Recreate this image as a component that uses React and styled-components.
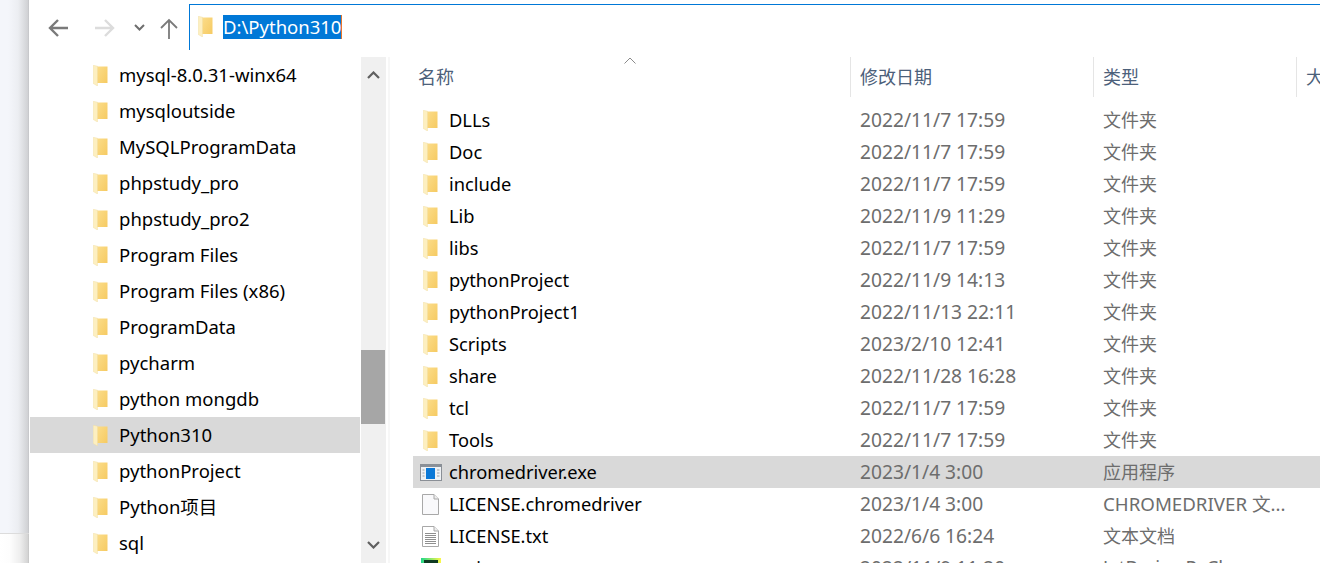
import React from "react";
import styled, { createGlobalStyle } from "styled-components";

const Global = createGlobalStyle`
  html, body { margin: 0; padding: 0; background: #fff; overflow: hidden; }
  #root { height: 563px; overflow: hidden; }
`;
const FONT = `"Noto Sans", "Noto Sans CJK SC", sans-serif`;

const Page = styled.div`
  display: flex; width: 1320px; height: 563px; overflow: hidden;
  font-family: ${FONT}; font-size: 18px; background: #fff;
`;
const Strip = styled.div`display: flex; flex-direction: column; width: 29px; flex: none;`;
const StripTop = styled.div`
  height: 534px; flex: none; border-bottom: 1px solid #dcdcdc; box-sizing: border-box;
  background: linear-gradient(90deg, #f4f6fb 0, #f4f6fb 8px, #eceef2 18px, #d0d1d4 28px, #bfc0c3 29px);
`;
const StripBottom = styled.div`
  flex: 1;
  background: linear-gradient(90deg, #fff 0, #fdfdfd 10px, #eeeeee 20px, #d3d3d3 28px, #c0c0c0 29px);
`;
const Window = styled.div`flex: 1; display: flex; flex-direction: column; min-width: 0; background: #fff;`;
const Toolbar = styled.div`display: flex; height: 57px; flex: none;`;
const Nav = styled.div`display: flex; width: 160px; flex: none;`;
const NavIcon = styled.svg`
  display: block; flex: none; margin-left: ${p => p.$ml}px; margin-top: ${p => p.$mt}px;
`;
const Address = styled.div`
  flex: 1; height: 46px; margin-top: 4px; box-sizing: border-box;
  border-top: 1px solid #0078d7; border-left: 1px solid #0078d7;
  display: flex; align-items: flex-start; padding: 10px 0 0 8px;
`;
const AddressIcon = styled.span`display: flex; width: 25px; flex: none; margin-top: 1px;`;
const Selected = styled.span`
  display: block; height: 24px; line-height: 24px; background: #0078d7; color: #fff;
  font-size: 18.5px; border-right: 1px solid #e8762c; white-space: nowrap;
`;
const Body = styled.div`display: flex; flex: 1; min-height: 0;`;
const Sidebar = styled.div`width: 332px; flex: none; overflow: hidden; padding-left: 1px; box-sizing: border-box; font-size: 18.5px;`;
const TreeRow = styled.div`
  display: flex; align-items: center; height: 36px; width: 330px; padding-left: 63px; box-sizing: border-box;
  background: ${p => (p.$active ? "#d9d9d9" : "transparent")}; color: #000; white-space: nowrap;
`;
const TreeIcon = styled.span`display: flex; width: 26px; flex: none;`;
const Label = styled.span`padding-bottom: 2px;`;
const Scroll = styled.div`
  width: 25px; flex: none; background: #f0f0f0; display: flex; flex-direction: column;
  border-right: 2px solid #fff; box-sizing: content-box;
`;
const ScrollBtn = styled.div`height: 36px; flex: none; display: flex; align-items: center; justify-content: center;`;
const ScrollGap = styled.div`height: 257px; flex: none;`;
const Thumb = styled.div`height: 74px; flex: none; background: #a6a6a6; margin-right: 1px;`;
const ScrollRest = styled.div`flex: 1;`;
const Rail = styled.div`width: 2px; flex: none; background: #f7f7f7; margin-right: 23px;`;
const List = styled.div`flex: 1; min-width: 0; overflow: hidden; position: relative;`;
const Header = styled.div`display: flex; height: 40px; margin-bottom: 7px; color: #4c607a;`;
const HeadCell = styled.div`
  width: ${p => p.$w}px; flex: none; height: 40px; line-height: 40px; box-sizing: border-box;
  padding-left: ${p => p.$pl}px; border-right: ${p => (p.$noLine ? "none" : "1px solid #e5e5e5")};
  white-space: nowrap;
`;
const SortArrow = styled.svg`position: absolute; left: 211px; top: 0;`;
const Row = styled.div`
  display: flex; align-items: center; height: 32px; white-space: nowrap;
  background: ${p => (p.$active ? "#d9d9d9" : "transparent")};
`;
const NameCell = styled.div`
  display: flex; align-items: center; width: 438px; flex: none; color: #000; padding-left: 7px;
  box-sizing: border-box; font-size: 18.3px;
`;
const RowIcon = styled.span`display: flex; width: ${p => 29 - p.$ml}px; margin-left: ${p => p.$ml}px; flex: none; align-items: center;`;
const DateCell = styled.div`
  width: 243px; flex: none; color: #6d6d6d; padding: 0 0 2px 9px; box-sizing: border-box; font-size: 19.2px;
`;
const TypeCell = styled.div`
  flex: 1; color: #6d6d6d; padding: 0 0 ${p => (p.$latin ? 4 : 2)}px 9px; box-sizing: border-box;
  font-size: ${p => (p.$latin ? "18.7px" : "18px")};
`;

const Folder = ({ id }) => (
  <svg width="15" height="21" viewBox="0 0 15 21">
    <defs>
      <linearGradient id={id} x1="0" x2="1" y1="0.1" y2="0.9">
        <stop offset="0" stopColor="#fbdc88" />
        <stop offset="1" stopColor="#f6cb64" />
      </linearGradient>
    </defs>
    <path d="M4 1.500H14.500V18H4Z" fill={`url(#${id})`} />
    <path d="M0.200 0.200L4.500 1.200V21L0.200 18.500Z" fill="#fdefc0" stroke="#f0dca0" strokeWidth="0.4" />
  </svg>
);

const ExeIcon = () => (
  <svg width="22" height="17" viewBox="0 0 22 17">
    <rect x="0.5" y="0.5" width="21" height="16" fill="#eef1f4" stroke="#8a8f96" />
    <rect x="1" y="1" width="20" height="2" fill="#8a9098" />
    <rect x="6" y="4" width="9" height="11" fill="#0a78d7" />
    <path d="M2.500 6h2M2.500 9h2M2.500 12h2M17 6h2.500M17 9h2.500M17 12h2.500" stroke="#9aa0a8" />
  </svg>
);
const FileIcon = ({ lines }) => (
  <svg width="17" height="21" viewBox="0 0 17 21">
    <path d="M0.500 0.500H12L16.500 5V20.500H0.500Z" fill={lines ? "#fff" : "#f9f9fb"} stroke="#a8a8a8" />
    <path d="M12 0.500V5H16.500" fill="#eee" stroke="#a8a8a8" />
    {lines && <path d="M3 7.500h11M3 9.500h11M3 11.500h11M3 13.500h11M3 15.500h11M3 17.500h11" stroke="#8f8f8f" />}
  </svg>
);
const PyIcon = () => (
  <svg width="20" height="20" viewBox="0 0 20 20">
    <defs>
      <linearGradient id="pyg" x1="0" x2="1" y1="0" y2="0">
        <stop offset="0" stopColor="#21d789" />
        <stop offset="1" stopColor="#fcf84a" />
      </linearGradient>
    </defs>
    <rect width="20" height="20" fill="url(#pyg)" />
    <rect x="3" y="2" width="14" height="15" fill="#0e3a22" />
  </svg>
);

const tree = ["mysql-8.0.31-winx64", "mysqloutside", "MySQLProgramData", "phpstudy_pro", "phpstudy_pro2", "Program Files", "Program Files (x86)", "ProgramData", "pycharm", "python mongdb", "Python310", "pythonProject", "Python项目", "sql"];
const files = [
  ["DLLs", "2022/11/7 17:59", "文件夹"], ["Doc", "2022/11/7 17:59", "文件夹"], ["include", "2022/11/7 17:59", "文件夹"],
  ["Lib", "2022/11/9 11:29", "文件夹"], ["libs", "2022/11/7 17:59", "文件夹"], ["pythonProject", "2022/11/9 14:13", "文件夹"],
  ["pythonProject1", "2022/11/13 22:11", "文件夹"], ["Scripts", "2023/2/10 12:41", "文件夹"], ["share", "2022/11/28 16:28", "文件夹"],
  ["tcl", "2022/11/7 17:59", "文件夹"], ["Tools", "2022/11/7 17:59", "文件夹"],
  ["chromedriver.exe", "2023/1/4 3:00", "应用程序", "exe"], ["LICENSE.chromedriver", "2023/1/4 3:00", "CHROMEDRIVER 文...", "file"],
  ["LICENSE.txt", "2022/6/6 16:24", "文本文档", "txt"], ["main.py", "2022/11/9 11:20", "JetBrains PyCharm", "py"],
];
const iconFor = (k, i) => k === "exe" ? <ExeIcon /> : k === "file" ? <FileIcon /> : k === "txt" ? <FileIcon lines /> : k === "py" ? <PyIcon /> : <Folder id={`f${i}`} />;
const shift = { exe: 0, file: 2, txt: 2, py: 1 };

export default function App() {
  return (
    <Page>
      <Global />
      <Strip><StripTop /><StripBottom /></Strip>
      <Window>
        <Toolbar>
          <Nav>
            <NavIcon $ml={19} $mt={18} width="21" height="20" viewBox="0 0 21 20" fill="none" stroke="#7a7a7a" strokeWidth="2.400">
              <path d="M20 10H2M10 2L2 10l8 8" />
            </NavIcon>
            <NavIcon $ml={25} $mt={18} width="21" height="20" viewBox="0 0 21 20" fill="none" stroke="#dcdcdc" strokeWidth="2.400">
              <path d="M1 10h18M11 2l8 8-8 8" />
            </NavIcon>
            <NavIcon $ml={19} $mt={24} width="11" height="7" viewBox="0 0 11 7" fill="none" stroke="#6e6e6e" strokeWidth="2">
              <path d="M1 1l4.500 4.500L10 1" />
            </NavIcon>
            <NavIcon $ml={15} $mt={18} width="18" height="21" viewBox="0 0 18 21" fill="none" stroke="#7a7a7a" strokeWidth="1.800">
              <path d="M9 21V2M1 10l8-8 8 8" />
            </NavIcon>
          </Nav>
          <Address>
            <AddressIcon><Folder id="addr" /></AddressIcon>
            <Selected>D:\Python310</Selected>
          </Address>
        </Toolbar>
        <Body>
          <Sidebar>
            {tree.map((t, i) => (
              <TreeRow key={t} $active={t === "Python310"}>
                <TreeIcon><Folder id={`t${i}`} /></TreeIcon><Label>{t}</Label>
              </TreeRow>
            ))}
          </Sidebar>
          <Scroll>
            <ScrollBtn>
              <svg width="13" height="8" viewBox="0 0 13 8" fill="none" stroke="#606060" strokeWidth="2.200"><path d="M1 7l5.500-5.500L12 7" /></svg>
            </ScrollBtn>
            <ScrollGap />
            <Thumb />
            <ScrollRest />
            <ScrollBtn>
              <svg width="13" height="8" viewBox="0 0 13 8" fill="none" stroke="#606060" strokeWidth="2.200"><path d="M1 1l5.500 5.500L12 1" /></svg>
            </ScrollBtn>
          </Scroll>
          <Rail />
          <List>
            <SortArrow width="12" height="8" viewBox="0 0 12 8" fill="none" stroke="#8a8a8a"><path d="M0.500 6.500L6 1l5.500 5.500" /></SortArrow>
            <Header>
              <HeadCell $w={438} $pl={5}>名称</HeadCell>
              <HeadCell $w={243} $pl={9}>修改日期</HeadCell>
              <HeadCell $w={203} $pl={9}>类型</HeadCell>
              <HeadCell $w={30} $pl={9} $noLine>大小</HeadCell>
            </Header>
            {files.map(([n, d, ty, k], i) => (
              <Row key={n} $active={k === "exe"}>
                <NameCell><RowIcon $ml={k ? shift[k] : 3}>{iconFor(k, i)}</RowIcon><Label>{n}</Label></NameCell>
                <DateCell>{d}</DateCell>
                <TypeCell $latin={/^[A-Z]/.test(ty)}>{ty}</TypeCell>
              </Row>
            ))}
          </List>
        </Body>
      </Window>
    </Page>
  );
}
